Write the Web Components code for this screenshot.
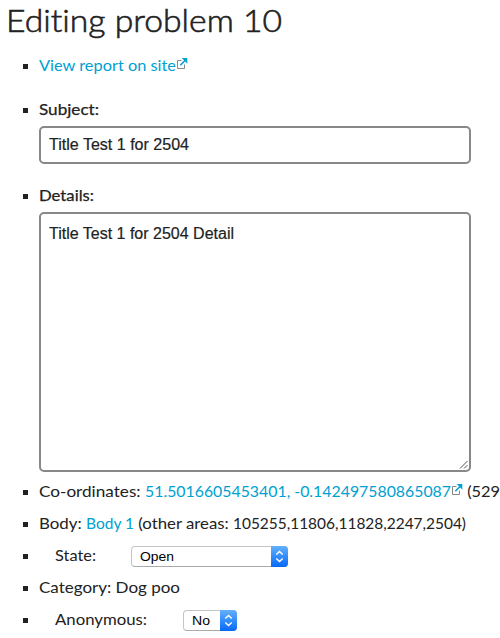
<!DOCTYPE html>
<html lang="en"><head><meta charset="utf-8"><title>Editing problem 10</title>
<style>
html,body{margin:0;background:#fff;overflow:hidden}
body{width:500px;height:638px;color:#222;font:16px/32px Lato,sans-serif;font-variant-ligatures:none}
</style></head><body>
<problem-editor></problem-editor>
<script>
// Text run whose glyphs are widened to fill the width given in "w".
customElements.define('text-run', class extends HTMLElement{
  constructor(){super();this.attachShadow({mode:'open'}).innerHTML=`<style>:host{display:inline-block;white-space:pre;width:var(--w);font-variant-ligatures:none}span{display:inline-block;transform-origin:0 0}</style><span><slot></slot></span>`}
  connectedCallback(){
    const s=this.shadowRoot.querySelector('span'),w=+this.getAttribute('w');
    this.style.setProperty('--w',w+'px');
    s.style.transform='scaleX('+w/s.getBoundingClientRect().width+')';
  }
});
customElements.define('list-row', class extends HTMLElement{
  constructor(){super();this.attachShadow({mode:'open'}).innerHTML=`<style>:host{display:flex;height:32px;padding-left:23px;white-space:nowrap}i{flex:none;width:5px;height:5px;margin:15px 11px 0 0;background:#222}div{display:flex;flex:none}</style><i></i><div><slot></slot></div>`}
});
customElements.define('external-icon', class extends HTMLElement{
  constructor(){super();this.attachShadow({mode:'open'}).innerHTML=`<style>:host{display:block;width:11px;height:11px;margin:9px 0 0 1px}svg{display:block}</style><svg width="11" height="11" viewBox="0 0 11 11" fill="none"><path d="M4.5 2.5h-4v8h7V6.5" stroke="#888"/><path d="M3.3 7.2 9 1.5" stroke="#00a0d2" stroke-width="1.6"/><path d="M4.5 0h5.8v5.8L8.7 4 6.3 1.6z" fill="#00a0d2"/></svg>`}
});
customElements.define('text-field', class extends HTMLElement{
  constructor(){super();this.attachShadow({mode:'open'}).innerHTML=`<style>:host{display:block;box-sizing:border-box;position:relative;width:432px;height:38px;margin-left:39px;border:2px solid #888;border-radius:5px;padding:6px 8px;font:16px/22px "Liberation Sans",sans-serif;-webkit-text-stroke:.2px #222}:host([large]){height:260px;padding-top:9px}svg{display:none;position:absolute;right:1px;bottom:1px}:host([large]) svg{display:block}</style><slot></slot><svg width="9" height="9"><path d="M1 8.5 8.5 1M5 8.5 8.5 5" stroke="#555" fill="none"/></svg>`}
});
customElements.define('select-box', class extends HTMLElement{
  constructor(){super();this.attachShadow({mode:'open'}).innerHTML=`<style>:host{display:flex;box-sizing:border-box;height:21px;margin-top:7px;border:1px solid #c4c4c4;border-bottom-color:#aaa;border-radius:4px;padding-left:8px;justify-content:space-between;color:#000;font:13.33px/20px "Liberation Sans",sans-serif}svg{display:block;flex:none;margin:-1px}</style><slot></slot><svg width="17" height="21"><defs><linearGradient id="g" x2="0" y2="1"><stop stop-color="#63b1fb"/><stop offset="1" stop-color="#0669f8"/></linearGradient></defs><path d="M0 0h13a4 4 0 0 1 4 4v13a4 4 0 0 1-4 4H0z" fill="url(#g)"/><path d="m5.3 8.5 3.2-3 3.2 3m-6.4 4 3.2 3 3.2-3" stroke="#fff" stroke-width="1.5" fill="none"/></svg>`}
});
customElements.define('problem-editor', class extends HTMLElement{
  constructor(){super();this.attachShadow({mode:'open'}).innerHTML=`<style>
:host{display:block;width:500px;height:638px;overflow:hidden}
h1{height:40px;margin:0 0 9px;padding-left:6px;font:300 32px/40px Lato,sans-serif;-webkit-text-stroke:.6px #222}
a{display:flex;color:#00a0d2}
.m{-webkit-text-stroke:.25px #222}
.subject{margin-top:12px}.field{margin-top:1px}.details{margin-top:15px}.coords{margin-top:3px}
</style>
<h1><text-run w="276">Editing problem 10</text-run></h1>
<list-row><a><text-run w="137">View report on site</text-run><external-icon></external-icon></a></list-row>
<list-row class="subject"><text-run class="m" w="60">Subject:</text-run></list-row>
<text-field class="field"><text-run w="140">Title Test 1 for 2504</text-run></text-field>
<list-row class="details"><text-run class="m" w="55">Details:</text-run></list-row>
<text-field class="field" large><text-run w="185">Title Test 1 for 2504 Detail</text-run></text-field>
<list-row class="coords"><text-run w="106">Co-ordinates: </text-run><a><text-run w="306">51.5016605453401, -0.142497580865087</text-run><external-icon></external-icon></a><text-run w="37"> (529</text-run></list-row>
<list-row><text-run w="47">Body: </text-run><a><text-run w="48">Body 1</text-run></a><text-run w="99"> (other areas: </text-run><text-run w="233">105255,11806,11828,2247,2504)</text-run></list-row>
<list-row><text-run style="margin:0 35px 0 16px" w="41">State:</text-run><select-box style="width:157px"><text-run w="34">Open</text-run></select-box></list-row>
<list-row><text-run w="141">Category: Dog poo</text-run></list-row>
<list-row><text-run style="margin:0 36px 0 16px" w="92">Anonymous:</text-run><select-box style="width:54px"><text-run w="18">No</text-run></select-box></list-row>`}
});
</script></body></html>
